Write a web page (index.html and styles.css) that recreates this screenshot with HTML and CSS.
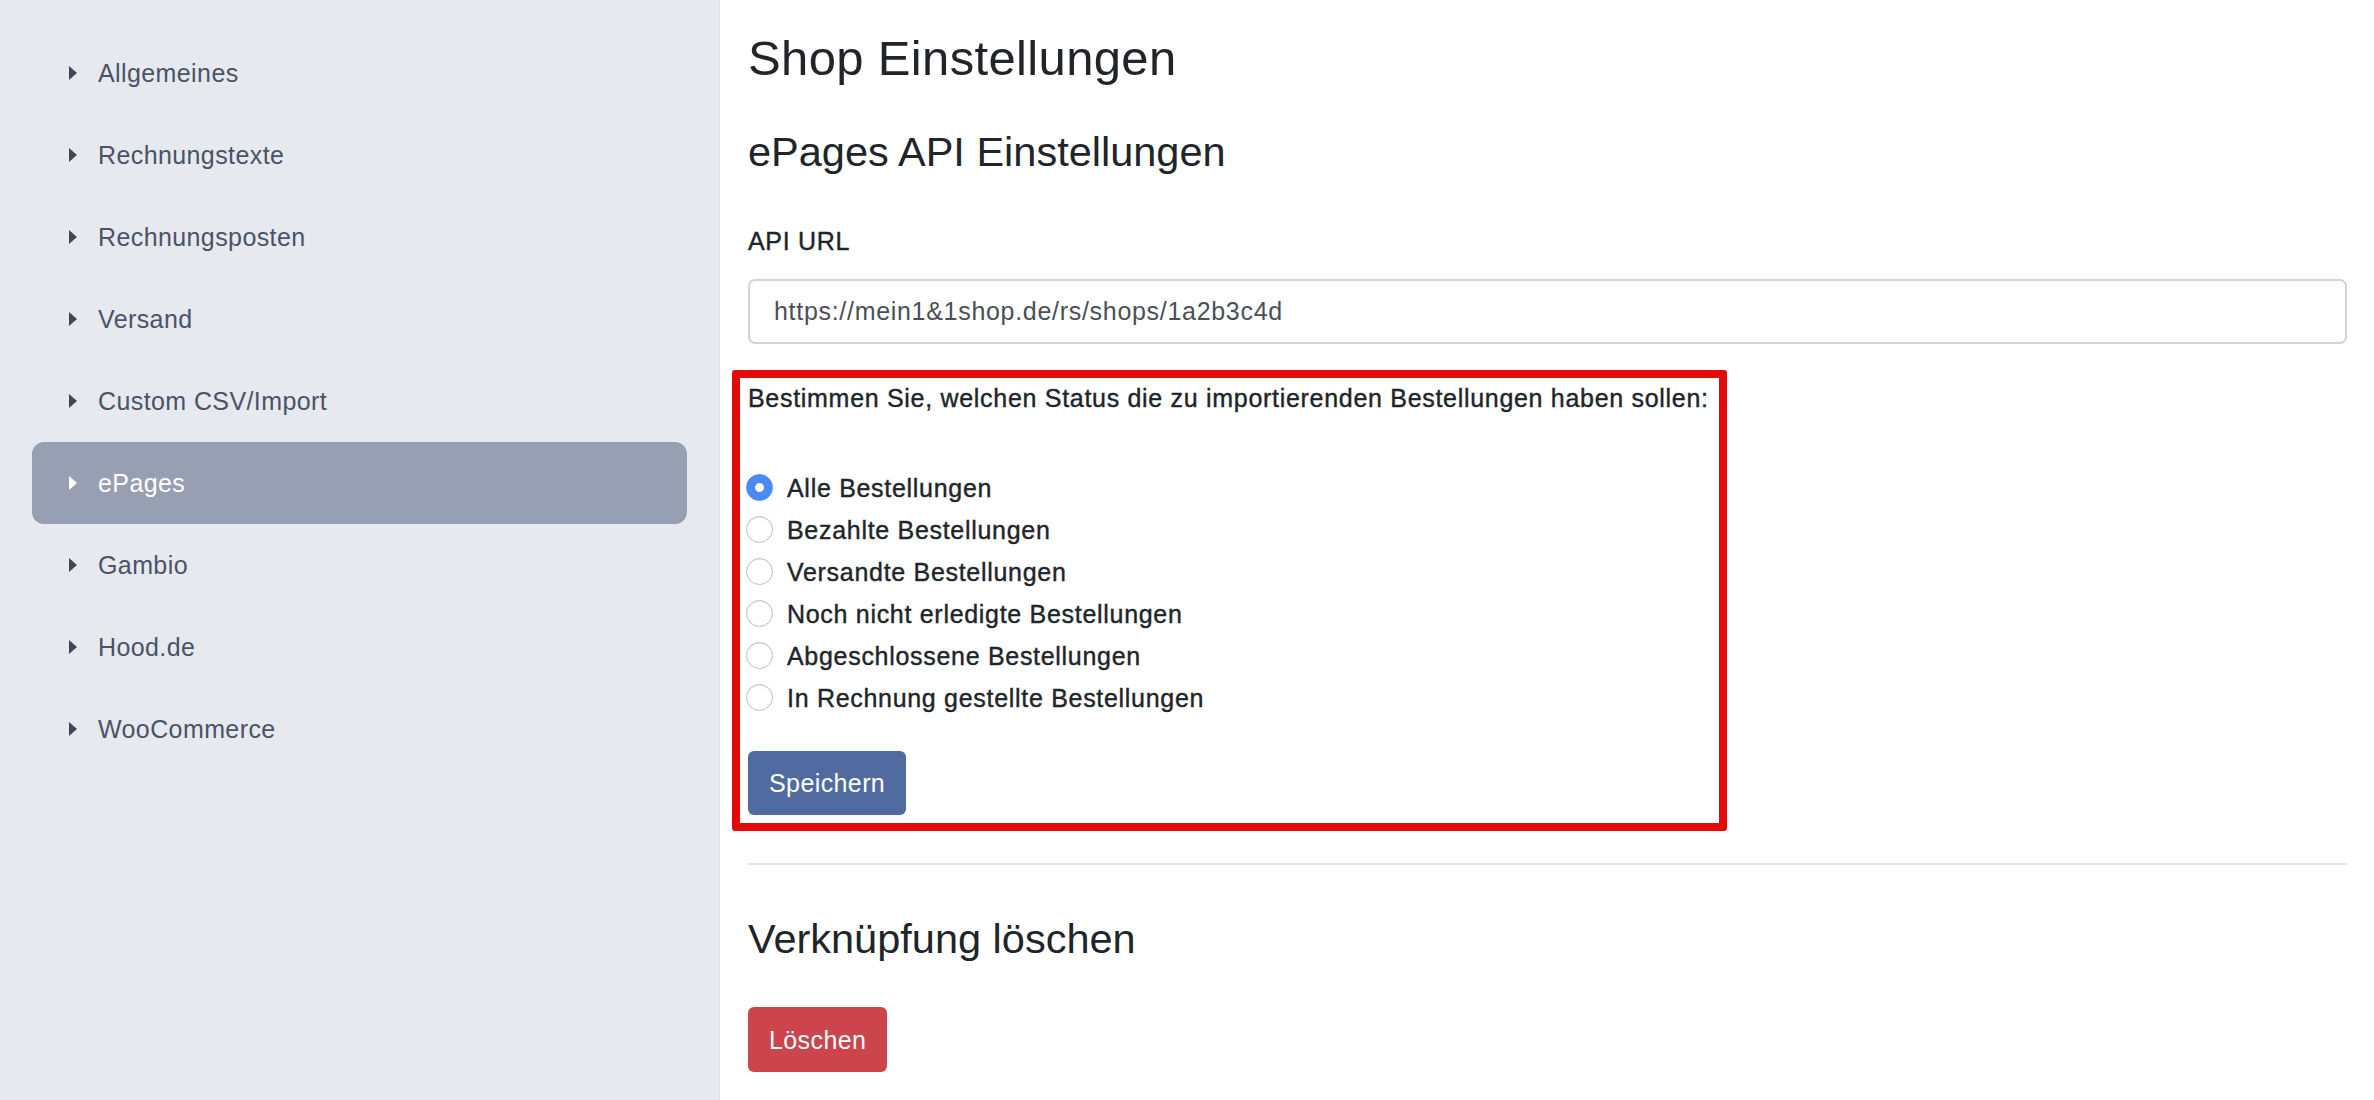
FILE: index.html
```html
<!DOCTYPE html>
<html lang="de">
<head>
    <meta charset="UTF-8">
    <meta name="viewport" content="width=device-width, initial-scale=1.0">
    <title>Shop Einstellungen</title>
    <link rel="stylesheet" href="styles.css">
</head>
<body>

    <!-- Settings navigation -->
    <nav class="sidebar">
        <a class="nav-item" href="#">Allgemeines</a>
        <a class="nav-item" href="#">Rechnungstexte</a>
        <a class="nav-item" href="#">Rechnungsposten</a>
        <a class="nav-item" href="#">Versand</a>
        <a class="nav-item" href="#">Custom CSV/Import</a>
        <a class="nav-item active" href="#">ePages</a>
        <a class="nav-item" href="#">Gambio</a>
        <a class="nav-item" href="#">Hood.de</a>
        <a class="nav-item" href="#">WooCommerce</a>
    </nav>

    <main class="content">
        <h2 class="page-title">Shop Einstellungen</h2>
        <h3 class="section-title">ePages API Einstellungen</h3>

        <form method="post" action="#">
            <label class="field-label" for="apiUrl">API URL</label>
            <input type="text" id="apiUrl" name="apiUrl" class="textbox" value="https://mein1&amp;1shop.de/rs/shops/1a2b3c4d">

            <div class="highlight-box">
                <p class="status-question">Bestimmen Sie, welchen Status die zu importierenden Bestellungen haben sollen:</p>

                <div class="radio-list">
                    <label class="radio-row"><input type="radio" name="status" value="all" checked> Alle Bestellungen</label>
                    <label class="radio-row"><input type="radio" name="status" value="paid"> Bezahlte Bestellungen</label>
                    <label class="radio-row"><input type="radio" name="status" value="shipped"> Versandte Bestellungen</label>
                    <label class="radio-row"><input type="radio" name="status" value="pending"> Noch nicht erledigte Bestellungen</label>
                    <label class="radio-row"><input type="radio" name="status" value="closed"> Abgeschlossene Bestellungen</label>
                    <label class="radio-row"><input type="radio" name="status" value="invoiced"> In Rechnung gestellte Bestellungen</label>
                </div>

                <button type="submit" class="btn btn-primary">Speichern</button>
            </div>
        </form>

        <hr class="divider">

        <h3 class="section-title">Verknüpfung löschen</h3>
        <button type="button" class="btn btn-danger">Löschen</button>
    </main>

</body>
</html>
```

FILE: styles.css
```css
body {
    font-family: "Liberation Sans", Arial, sans-serif;
    font-size: 25px;
    line-height: 36px;
    letter-spacing: 0.7px;
    color: #212529;
    background-color: #fff;
    display: flex;
    height: 100vh;
    margin: 0;
}

/* Left settings menu */
.sidebar {
    width: 720px;
    flex-shrink: 0;
    box-sizing: border-box;
    padding: 32px 32px 0 32px;
    background-color: #e6e9ee;
    border-right: 1px solid #dde1e7;
    display: flex;
    flex-direction: column;
    letter-spacing: 0.4px;
}

.nav-item {
    display: flex;
    align-items: center;
    height: 82px;
    padding-left: 37px;
    border-radius: 12px;
    color: #4a5367;
    text-decoration: none;
}

.nav-item::before {
    content: "";
    width: 0;
    height: 0;
    border-top: 7px solid transparent;
    border-bottom: 7px solid transparent;
    border-left: 8px solid #3f4657;
    margin-right: 21px;
}

.nav-item.active {
    background-color: #97a0b2;
    color: #fff;
}

.nav-item.active::before {
    border-left-color: #fff;
}

/* Main panel */
.content {
    flex: 1;
    padding: 29px 27px 0 28px;
}

.page-title {
    font-size: 49px;
    font-weight: 500;
    line-height: 1.2;
    letter-spacing: 0.35px;
    margin: 0 0 39px 0;
}

.section-title {
    font-size: 41.5px;
    font-weight: 500;
    line-height: 1.2;
    letter-spacing: 0;
    margin: 0;
}

.field-label,
.status-question,
.radio-row {
    -webkit-text-stroke: 0.4px #212529;
}

.field-label {
    display: block;
    margin-top: 46px;
}

.textbox {
    display: block;
    width: 100%;
    box-sizing: border-box;
    height: 65px;
    margin-top: 20px;
    padding: 0 24px;
    font-family: inherit;
    font-size: 25px;
    letter-spacing: 0.7px;
    color: #495057;
    border: 2px solid #ced4da;
    border-radius: 7px;
    outline: none;
}

/* Red marker round the status choice */
.highlight-box {
    width: 995px;
    box-sizing: border-box;
    margin: 26px 0 0 -16px;
    padding: 2px 8px 8px 8px;
    border: 8px solid #e30a0a;
    border-radius: 3px;
}

.status-question {
    margin: 0;
}

.radio-list {
    margin-top: 51px;
    display: flex;
    flex-direction: column;
}

.radio-row {
    display: flex;
    align-items: center;
    height: 42px;
}

.radio-row input {
    appearance: none;
    -webkit-appearance: none;
    width: 27px;
    height: 27px;
    margin: 0 14px 0 -2px;
    border: 1px solid #bdbdbd;
    border-radius: 50%;
    background-color: #fff;
    box-shadow: inset 0 1px 1px rgba(0, 0, 0, 0.08);
    flex-shrink: 0;
}

.radio-row input:checked {
    border-color: #4b8bf5;
    background: radial-gradient(circle, #fff 0, #fff 4px, #4b8bf5 5px);
    box-shadow: none;
}

.btn {
    font-family: inherit;
    font-size: 25px;
    line-height: 36px;
    letter-spacing: 0.4px;
    color: #fff;
    border: none;
    border-radius: 6px;
    padding: 14px 21px;
}

.btn-primary {
    background-color: #4f6b9f;
    margin-top: 32px;
}

.btn-danger {
    background-color: #cc444c;
    padding: 15px 21px 14px 21px;
    margin-top: 44px;
}

.divider {
    border: none;
    border-top: 2px solid #e2e3e5;
    margin: 32px 0 49px 0;
}
```
